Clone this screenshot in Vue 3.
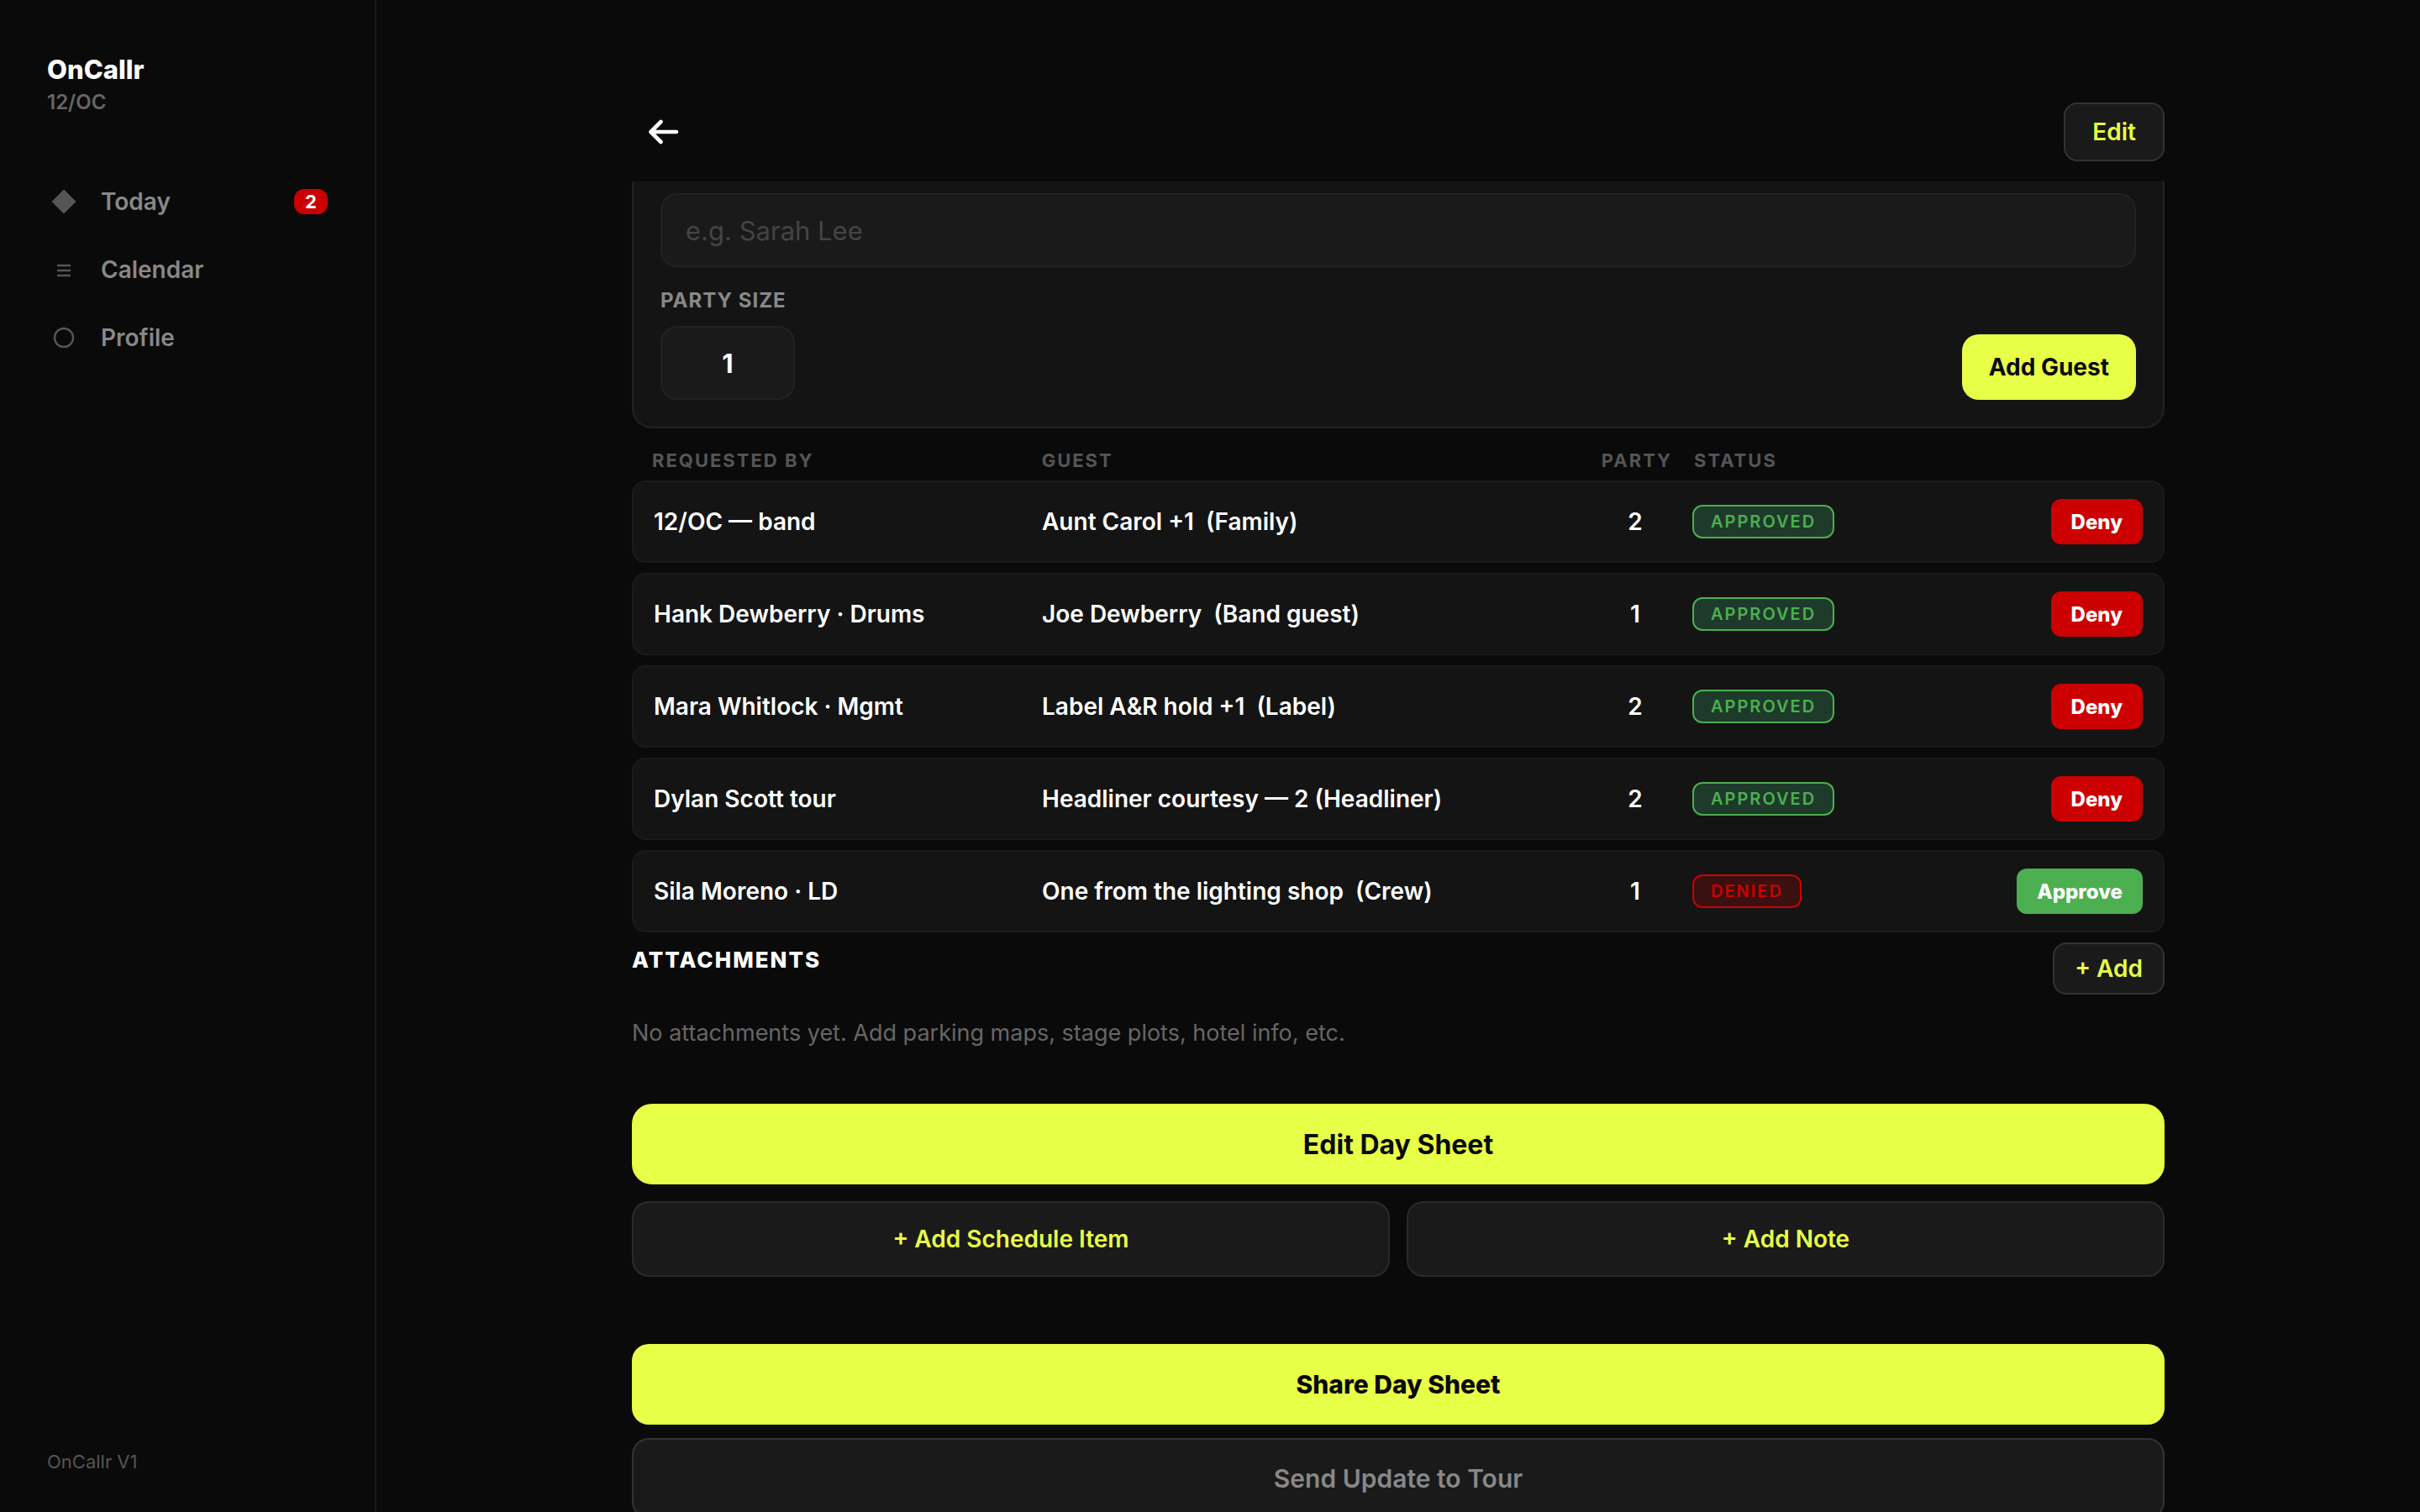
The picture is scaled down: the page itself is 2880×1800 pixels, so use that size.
<script setup>
import { ref } from "vue";

const guestName = ref("");
const partySize = ref("1");

const navItems = [
  { label: "Today", icon: "diamond", badge: 2 },
  { label: "Calendar", icon: "lines" },
  { label: "Profile", icon: "circle" },
];

const guests = ref([
  { by: "12/OC — band", guest: "Aunt Carol +1\u00a0 (Family)", party: 2, status: "approved" },
  { by: "Hank Dewberry · Drums", guest: "Joe Dewberry\u00a0 (Band guest)", party: 1, status: "approved" },
  { by: "Mara Whitlock · Mgmt", guest: "Label A&R hold +1\u00a0 (Label)", party: 2, status: "approved" },
  { by: "Dylan Scott tour", guest: "Headliner courtesy — 2 (Headliner)", party: 2, status: "approved" },
  { by: "Sila Moreno · LD", guest: "One from the lighting shop\u00a0 (Crew)", party: 1, status: "denied" },
]);

const toggleStatus = (row) => {
  row.status = row.status === "approved" ? "denied" : "approved";
};

const addGuest = () => {
  if (!guestName.value) return;
  guests.value.push({
    by: "12/OC — band",
    guest: guestName.value,
    party: Number(partySize.value) || 1,
    status: "approved",
  });
  guestName.value = "";
  partySize.value = "1";
};
</script>

<template>
  <div class="app">
    <aside class="sidebar">
      <div class="brand">OnCallr</div>
      <div class="band">12/OC</div>
      <nav class="nav">
        <a v-for="item in navItems" :key="item.label" href="#" class="nav-item">
          <svg class="nav-icon" viewBox="0 0 32 32">
            <path v-if="item.icon === 'diamond'" d="M16 1.5 30.5 16 16 30.5 1.5 16z" fill="currentColor" />
            <path
              v-else-if="item.icon === 'lines'"
              d="M8 11h16M8 17h16M8 23h16"
              stroke="currentColor"
              stroke-width="2.4"
            />
            <circle v-else cx="16" cy="16" r="11" fill="none" stroke="currentColor" stroke-width="2.4" />
          </svg>
          <span class="nav-label">{{ item.label }}</span>
          <span v-if="item.badge" class="badge">{{ item.badge }}</span>
        </a>
      </nav>
      <div class="version">OnCallr V1</div>
    </aside>

    <main class="main">
      <div class="content">
        <header class="header">
          <button class="back" aria-label="Back">
            <svg viewBox="0 0 40 32">
              <path
                d="M14.5 4 2.5 16l12 12M2.5 16h30.5"
                fill="none"
                stroke="currentColor"
                stroke-width="4.6"
                stroke-linecap="round"
                stroke-linejoin="round"
              />
            </svg>
          </button>
          <button class="outline-btn edit">Edit</button>
        </header>

        <form class="card" @submit.prevent="addGuest">
          <input v-model="guestName" class="input" aria-label="Guest name" placeholder="e.g. Sarah Lee" />
          <div class="form-row">
            <div class="field">
              <label class="label" for="party">PARTY SIZE</label>
              <input id="party" v-model="partySize" class="input party-input" inputmode="numeric" />
            </div>
            <button type="submit" class="add-guest">Add Guest</button>
          </div>
        </form>

        <table class="guests">
          <thead>
            <tr class="guest-head">
              <th>REQUESTED BY</th>
              <th>GUEST</th>
              <th class="party">PARTY</th>
              <th>STATUS</th>
              <td></td>
            </tr>
          </thead>
          <tbody>
            <tr v-for="row in guests" :key="row.guest" class="guest-row">
              <td>{{ row.by }}</td>
              <td>{{ row.guest }}</td>
              <td class="party">{{ row.party }}</td>
              <td><span class="pill" :class="row.status">{{ row.status.toUpperCase() }}</span></td>
              <td class="action">
                <button
                  class="small-btn"
                  :class="row.status === 'approved' ? 'deny' : 'approve'"
                  @click="toggleStatus(row)"
                >
                  {{ row.status === "approved" ? "Deny" : "Approve" }}
                </button>
              </td>
            </tr>
          </tbody>
        </table>

        <section class="attachments">
          <h2 class="section-title">ATTACHMENTS</h2>
          <button class="outline-btn add">+ Add</button>
        </section>
        <p class="empty">No attachments yet. Add parking maps, stage plots, hotel info, etc.</p>

        <button class="primary edit-sheet">Edit Day Sheet</button>
        <div class="split">
          <button class="secondary">+ Add Schedule Item</button>
          <button class="secondary">+ Add Note</button>
        </div>
        <button class="primary share">Share Day Sheet</button>
        <button class="send">Send Update to Tour</button>
      </div>
    </main>
  </div>
</template>

<style>
body {
  background: #0a0a0a;
}
</style>

<style scoped>
* {
  box-sizing: border-box;
}

.app {
  display: flex;
  height: 100vh;
  overflow: hidden;
  background: #0a0a0a;
  color: #fff;
  font-family: Inter, "Liberation Sans", sans-serif;
}

button,
input {
  font-family: inherit;
  margin: 0;
}

button {
  flex-shrink: 0;
  padding: 0;
  border: none;
  cursor: pointer;
}

/* Sidebar */
.sidebar {
  display: flex;
  flex-direction: column;
  flex: 0 0 448px;
  padding: 62px 56px 44px;
  border-right: 2px solid #1a1a1a;
}

.brand {
  font-size: 31px;
  font-weight: 800;
  line-height: 42px;
}

.band {
  color: #666;
  font-size: 24px;
  font-weight: 600;
  line-height: 36px;
}

.nav {
  display: flex;
  flex-direction: column;
  gap: 4px;
  margin-top: 61px;
}

.nav-item {
  display: flex;
  align-items: center;
  height: 77px;
  padding: 0 0 0 4px;
  color: #888;
  font-size: 28px;
  font-weight: 600;
  text-decoration: none;
}

.nav-icon {
  width: 32px;
  height: 32px;
  margin-right: 28px;
  color: #555;
}

.nav-label {
  flex: 1;
}

.badge {
  min-width: 40px;
  border-radius: 12px;
  background: #c00;
  color: #fff;
  font-size: 22px;
  font-weight: 700;
  line-height: 30px;
  text-align: center;
}

.version {
  margin-top: auto;
  color: #555;
  font-size: 22px;
  line-height: 32px;
}

/* Main column */
.main {
  flex: 1;
  overflow: hidden;
  padding: 0 48px;
}

.content {
  display: flex;
  flex-direction: column;
  max-width: 1824px;
  margin: 0 auto;
}

.header {
  display: flex;
  align-items: center;
  justify-content: space-between;
  padding: 122px 0 24px;
}

.back {
  width: 80px;
  height: 70px;
  background: none;
  color: #fff;
}

.back svg {
  display: block;
  width: 40px;
  height: 32px;
  margin: 0 auto;
}

.outline-btn {
  border: 2px solid #333;
  border-radius: 16px;
  background: #1a1a1a;
  color: #e8ff47;
  font-size: 28px;
  font-weight: 600;
}

.edit {
  height: 70px;
  padding: 0 32px;
}

.add {
  height: 62px;
  padding: 0 24px;
}

/* Guest form */
.card {
  padding: 14px 32px 32px;
  border: 2px solid #222;
  border-top: none;
  border-radius: 0 0 24px 24px;
  background: #141414;
}

.input {
  display: block;
  width: 100%;
  height: 88px;
  padding: 0 28px;
  border: 2px solid #222;
  border-radius: 20px;
  outline: none;
  background: #1a1a1a;
  color: #fff;
  font-size: 31px;
}

.input::placeholder {
  color: #444;
}

.form-row {
  display: flex;
  align-items: flex-end;
  justify-content: space-between;
  margin-top: 24px;
}

.label {
  display: block;
  margin-bottom: 14px;
  color: #888;
  font-size: 24px;
  font-weight: 700;
  letter-spacing: 1px;
  line-height: 32px;
}

.party-input {
  width: 160px;
  font-weight: 700;
  text-align: center;
}

.add-guest {
  height: 78px;
  padding: 0 32px;
  border-radius: 20px;
  background: #e8ff47;
  color: #0a0a0a;
  font-size: 28px;
  font-weight: 700;
}

/* Guest list */
.guests,
.guests thead {
  display: block;
}

.guests tbody {
  display: flex;
  flex-direction: column;
  gap: 12px;
}

.guest-head,
.guest-row {
  display: grid;
  grid-template-columns: 442fr 638fr 96px 240px 276px;
  column-gap: 20px;
  align-items: center;
  padding: 0 24px;
}

.guests th,
.guests td {
  padding: 0;
  text-align: left;
}

.guest-head {
  height: 40px;
  margin: 18px 0 4px;
  color: #555;
  font-size: 22px;
  letter-spacing: 2px;
}

.guest-head th {
  font-weight: 700;
}

.guest-row {
  height: 98px;
  border: 2px solid #1a1a1a;
  border-radius: 16px;
  background: #141414;
  font-size: 28px;
  font-weight: 600;
}

.guests .party {
  text-align: center;
}

.guests .action {
  text-align: right;
}

.pill {
  display: block;
  width: fit-content;
  padding: 0 20px;
  border: 2px solid;
  border-radius: 12px;
  font-size: 20px;
  font-weight: 600;
  letter-spacing: 2px;
  line-height: 36px;
}

.approved {
  background: #1e3a2a;
  color: #4caf50;
}

.denied {
  background: #3a1010;
  color: #c00;
}

.small-btn {
  height: 54px;
  padding: 0 24px;
  border-radius: 12px;
  color: #fff;
  font-size: 24px;
  font-weight: 800;
}

.deny {
  background: #c00;
}

.approve {
  background: #4caf50;
}

/* Attachments */
.attachments {
  display: flex;
  align-items: flex-start;
  justify-content: space-between;
  margin-top: 12px;
}

.section-title {
  margin: 0;
  font-size: 26px;
  font-weight: 800;
  letter-spacing: 2px;
  line-height: 42px;
}

.empty {
  margin: 24px 0 62px;
  color: #666;
  font-size: 27px;
  line-height: 44px;
}

/* Page actions */
.primary {
  height: 96px;
  background: #e8ff47;
  color: #0a0a0a;
}

.edit-sheet {
  border-radius: 24px;
  font-size: 32px;
  font-weight: 700;
}

.split {
  display: grid;
  grid-template-columns: 1fr 1fr;
  gap: 20px;
  margin: 20px 0 80px;
}

.secondary {
  height: 90px;
  border: 2px solid #2a2a2a;
  border-radius: 20px;
  background: #1a1a1a;
  color: #e8ff47;
  font-size: 28px;
  font-weight: 600;
}

.share {
  border-radius: 20px;
  font-size: 30px;
  font-weight: 800;
}

.send {
  height: 96px;
  margin-top: 16px;
  border: 2px solid #333;
  border-radius: 20px;
  background: #1a1a1a;
  color: #888;
  font-size: 30px;
  font-weight: 600;
}
</style>
